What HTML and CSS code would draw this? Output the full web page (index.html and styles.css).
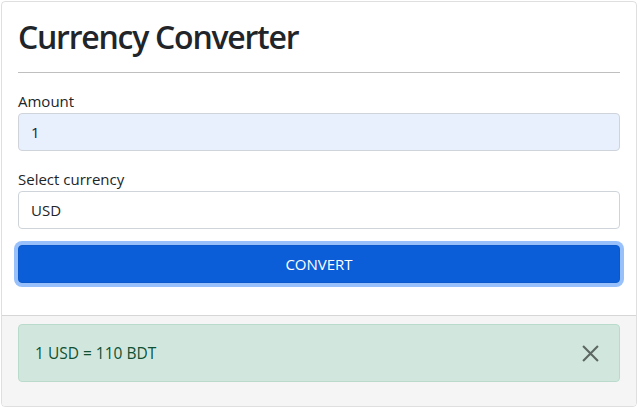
FILE: index.html
```html
<!DOCTYPE html>
<html lang="en">
<head>
<meta charset="utf-8">
<title>Currency Converter</title>
<link rel="stylesheet" href="styles.css">
</head>
<body>
  <div class="card">
    <div class="card-body">
      <h2 class="title">Currency Converter</h2>
      <hr class="rule">
      <div class="field">
        <label class="label" for="amount">Amount</label>
        <input class="input input-autofill" id="amount" type="text" value="1">
      </div>
      <div class="field">
        <label class="label" for="currency">Select currency</label>
        <input class="input" id="currency" type="text" value="USD">
      </div>
      <button class="btn-convert" type="button">Convert</button>
    </div>
    <div class="card-footer">
      <div class="alert">
        <span class="alert-text">1 USD = 110 BDT</span>
        <button class="btn-close" type="button" aria-label="Close">
          <svg viewBox="0 0 16 16" width="17" height="17"><path d="M1 1L15 15M15 1L1 15" stroke="#000" stroke-width="2" fill="none"/></svg>
        </button>
      </div>
    </div>
  </div>
</body>
</html>
```
FILE: styles.css
```css
* { box-sizing: border-box; }
html, body { margin: 0; background: #fff; }
body {
  padding: 1px;
  font-family: "Open Sans", "Noto Sans", "Liberation Sans", sans-serif;
  font-size: 16px;
  line-height: 1.5;
  color: #212529;
}
.card {
  width: 636px;
  border: 1px solid rgba(0,0,0,.125);
  border-radius: 4px;
  display: flex;
  flex-direction: column;
  overflow: hidden;
}
.card-body {
  padding: 16px;
  display: flex;
  flex-direction: column;
}
.title {
  margin: 0;
  font-size: 32px;
  font-weight: 600;
  line-height: 1.2;
  letter-spacing: -1.25px;
}
.rule {
  margin: 16px 0;
  border: 0;
  border-top: 1px solid rgba(0,0,0,.25);
  height: 0;
}
.field {
  display: flex;
  flex-direction: column;
  margin-bottom: 16px;
}
.label {
  font-size: 15px;
  line-height: 24px;
}
.input {
  height: 38px;
  padding: 6px 12px;
  font: inherit;
  font-size: 15px;
  color: #212529;
  background: #fff;
  border: 1px solid #ced4da;
  border-radius: 4px;
}
.input-autofill { background: #e8f0fe; }
.btn-convert {
  height: 38px;
  margin-bottom: 16px;
  font: inherit;
  font-size: 15px;
  text-transform: uppercase;
  color: #fff;
  background: #0b5ed7;
  border: 1px solid #0a58ca;
  border-radius: 4px;
  box-shadow: 0 0 0 4px #98c0fb;
}
.card-footer {
  padding: 8px 16px;
  background: #f5f5f5;
  border-top: 1px solid rgba(0,0,0,.125);
}
.alert {
  position: relative;
  height: 58px;
  padding: 16px 48px 16px 16px;
  margin-bottom: 16px;
  color: #0f5132;
  background: #d1e7dd;
  border: 1px solid #badbcc;
  border-radius: 4px;
  font-size: 15.5px;
  display: flex;
  align-items: center;
}
.btn-close {
  position: absolute;
  top: 0;
  right: 0;
  height: 100%;
  width: 58px;
  padding: 0 20px 0 0;
  background: transparent;
  border: 0;
  opacity: .55;
  display: flex;
  align-items: center;
  justify-content: flex-end;
}
```
